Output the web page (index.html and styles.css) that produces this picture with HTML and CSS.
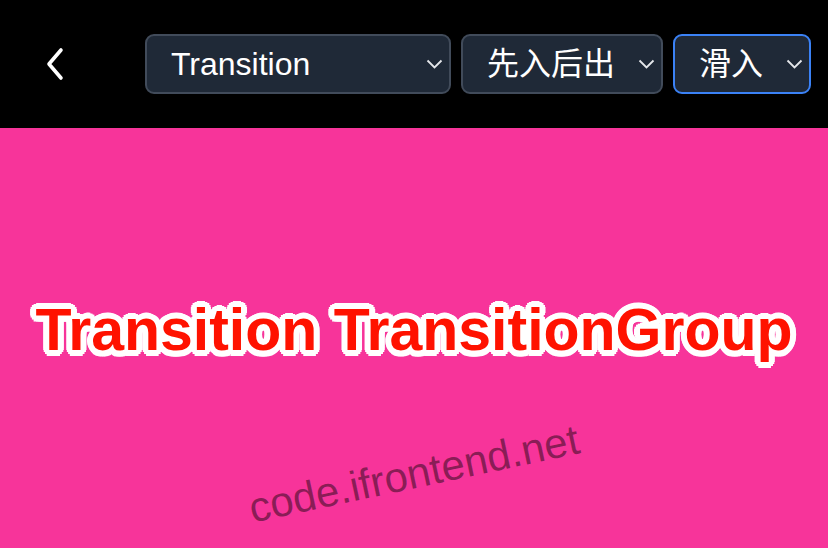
FILE: index.html
```html
<!DOCTYPE html>
<html lang="zh-CN">
<head>
<meta charset="UTF-8">
<meta name="viewport" content="width=device-width, initial-scale=1.0">
<title>Transition TransitionGroup</title>
<link rel="stylesheet" href="styles.css">
</head>
<body>
    <header class="top-bar">
        <button class="back-btn" type="button" aria-label="返回">
            <svg width="20" height="34" viewBox="0 0 20 34">
                <path d="M16 3 L4 17 L16 31" fill="none" stroke="#fff" stroke-width="3.6" stroke-linecap="round" stroke-linejoin="round"/>
            </svg>
        </button>
        <div class="filters">
            <div class="select-wrap select-main">
                <select name="component">
                    <option>Transition</option>
                    <option>TransitionGroup</option>
                </select>
                <svg class="caret" width="17" height="10" viewBox="0 0 17 10"><path d="M1.5 1.5 L8.5 8.5 L15.5 1.5" fill="none" stroke="#e5e7eb" stroke-width="1.8"/></svg>
            </div>
            <div class="select-wrap select-order">
                <select name="order">
                    <option>先入后出</option>
                    <option>先出后入</option>
                </select>
                <svg class="caret" width="17" height="10" viewBox="0 0 17 10"><path d="M1.5 1.5 L8.5 8.5 L15.5 1.5" fill="none" stroke="#e5e7eb" stroke-width="1.8"/></svg>
            </div>
            <div class="select-wrap select-effect active">
                <select name="effect">
                    <option>滑入</option>
                    <option>淡入</option>
                </select>
                <svg class="caret" width="17" height="10" viewBox="0 0 17 10"><path d="M1.5 1.5 L8.5 8.5 L15.5 1.5" fill="none" stroke="#e5e7eb" stroke-width="1.8"/></svg>
            </div>
        </div>
    </header>

    <main class="stage">
        <h1 class="title">Transition TransitionGroup</h1>
        <div class="watermark">code.ifrontend.net</div>
    </main>
</body>
</html>
```

FILE: styles.css
```css
html, body {
    height: 100%;
}

body {
    margin: 0;
    font-family: "Liberation Sans", "Noto Sans CJK SC", Arial, sans-serif;
    background-color: #f7349a;
    display: flex;
    flex-direction: column;
}

.top-bar {
    height: 128px;
    flex-shrink: 0;
    background-color: #000;
    display: flex;
    align-items: center;
    padding: 0 17px 0 28px;
    box-sizing: border-box;
}

.back-btn {
    width: 54px;
    height: 54px;
    padding: 0;
    border: none;
    background: none;
    display: flex;
    align-items: center;
    justify-content: center;
    cursor: pointer;
}

.filters {
    flex: 1;
    display: flex;
    gap: 10px;
    margin-left: 63px;
}

.select-wrap {
    position: relative;
}

.select-main {
    flex: 1;
}

.select-order {
    width: 202px;
}

.select-effect {
    width: 138px;
}

.select-wrap select {
    width: 100%;
    height: 60px;
    box-sizing: border-box;
    padding: 0 36px 0 24px;
    appearance: none;
    -webkit-appearance: none;
    background-color: #1f2937;
    color: #fff;
    border: 2px solid #414b5a;
    border-radius: 9px;
    font-family: inherit;
    font-size: 32px;
    outline: none;
}

.select-wrap.active select {
    border-color: #3b82f6;
}

.caret {
    position: absolute;
    right: 8px;
    top: 25px;
    pointer-events: none;
}

.stage {
    flex: 1;
    position: relative;
    display: flex;
    align-items: center;
    justify-content: center;
    padding-bottom: 16px;
    overflow: hidden;
}

/* white outline drawn with a ring of shadows so the corners stay round */
.title {
    margin: 0;
    font-size: 59px;
    font-weight: bold;
    color: #ff1200;
    white-space: nowrap;
    text-shadow:
        6px 0 0 #fff, -6px 0 0 #fff, 0 6px 0 #fff, 0 -6px 0 #fff,
        4.2px 4.2px 0 #fff, -4.2px 4.2px 0 #fff, 4.2px -4.2px 0 #fff, -4.2px -4.2px 0 #fff,
        5.5px 2.3px 0 #fff, -5.5px 2.3px 0 #fff, 5.5px -2.3px 0 #fff, -5.5px -2.3px 0 #fff,
        2.3px 5.5px 0 #fff, -2.3px 5.5px 0 #fff, 2.3px -5.5px 0 #fff, -2.3px -5.5px 0 #fff,
        3px 0 0 #fff, -3px 0 0 #fff, 0 3px 0 #fff, 0 -3px 0 #fff;
}

.watermark {
    position: absolute;
    left: 50%;
    top: 346px;
    transform: translate(-50%, -50%) rotate(-12deg);
    font-size: 42px;
    color: rgba(0, 0, 0, 0.45);
    white-space: nowrap;
    pointer-events: none;
}
```
